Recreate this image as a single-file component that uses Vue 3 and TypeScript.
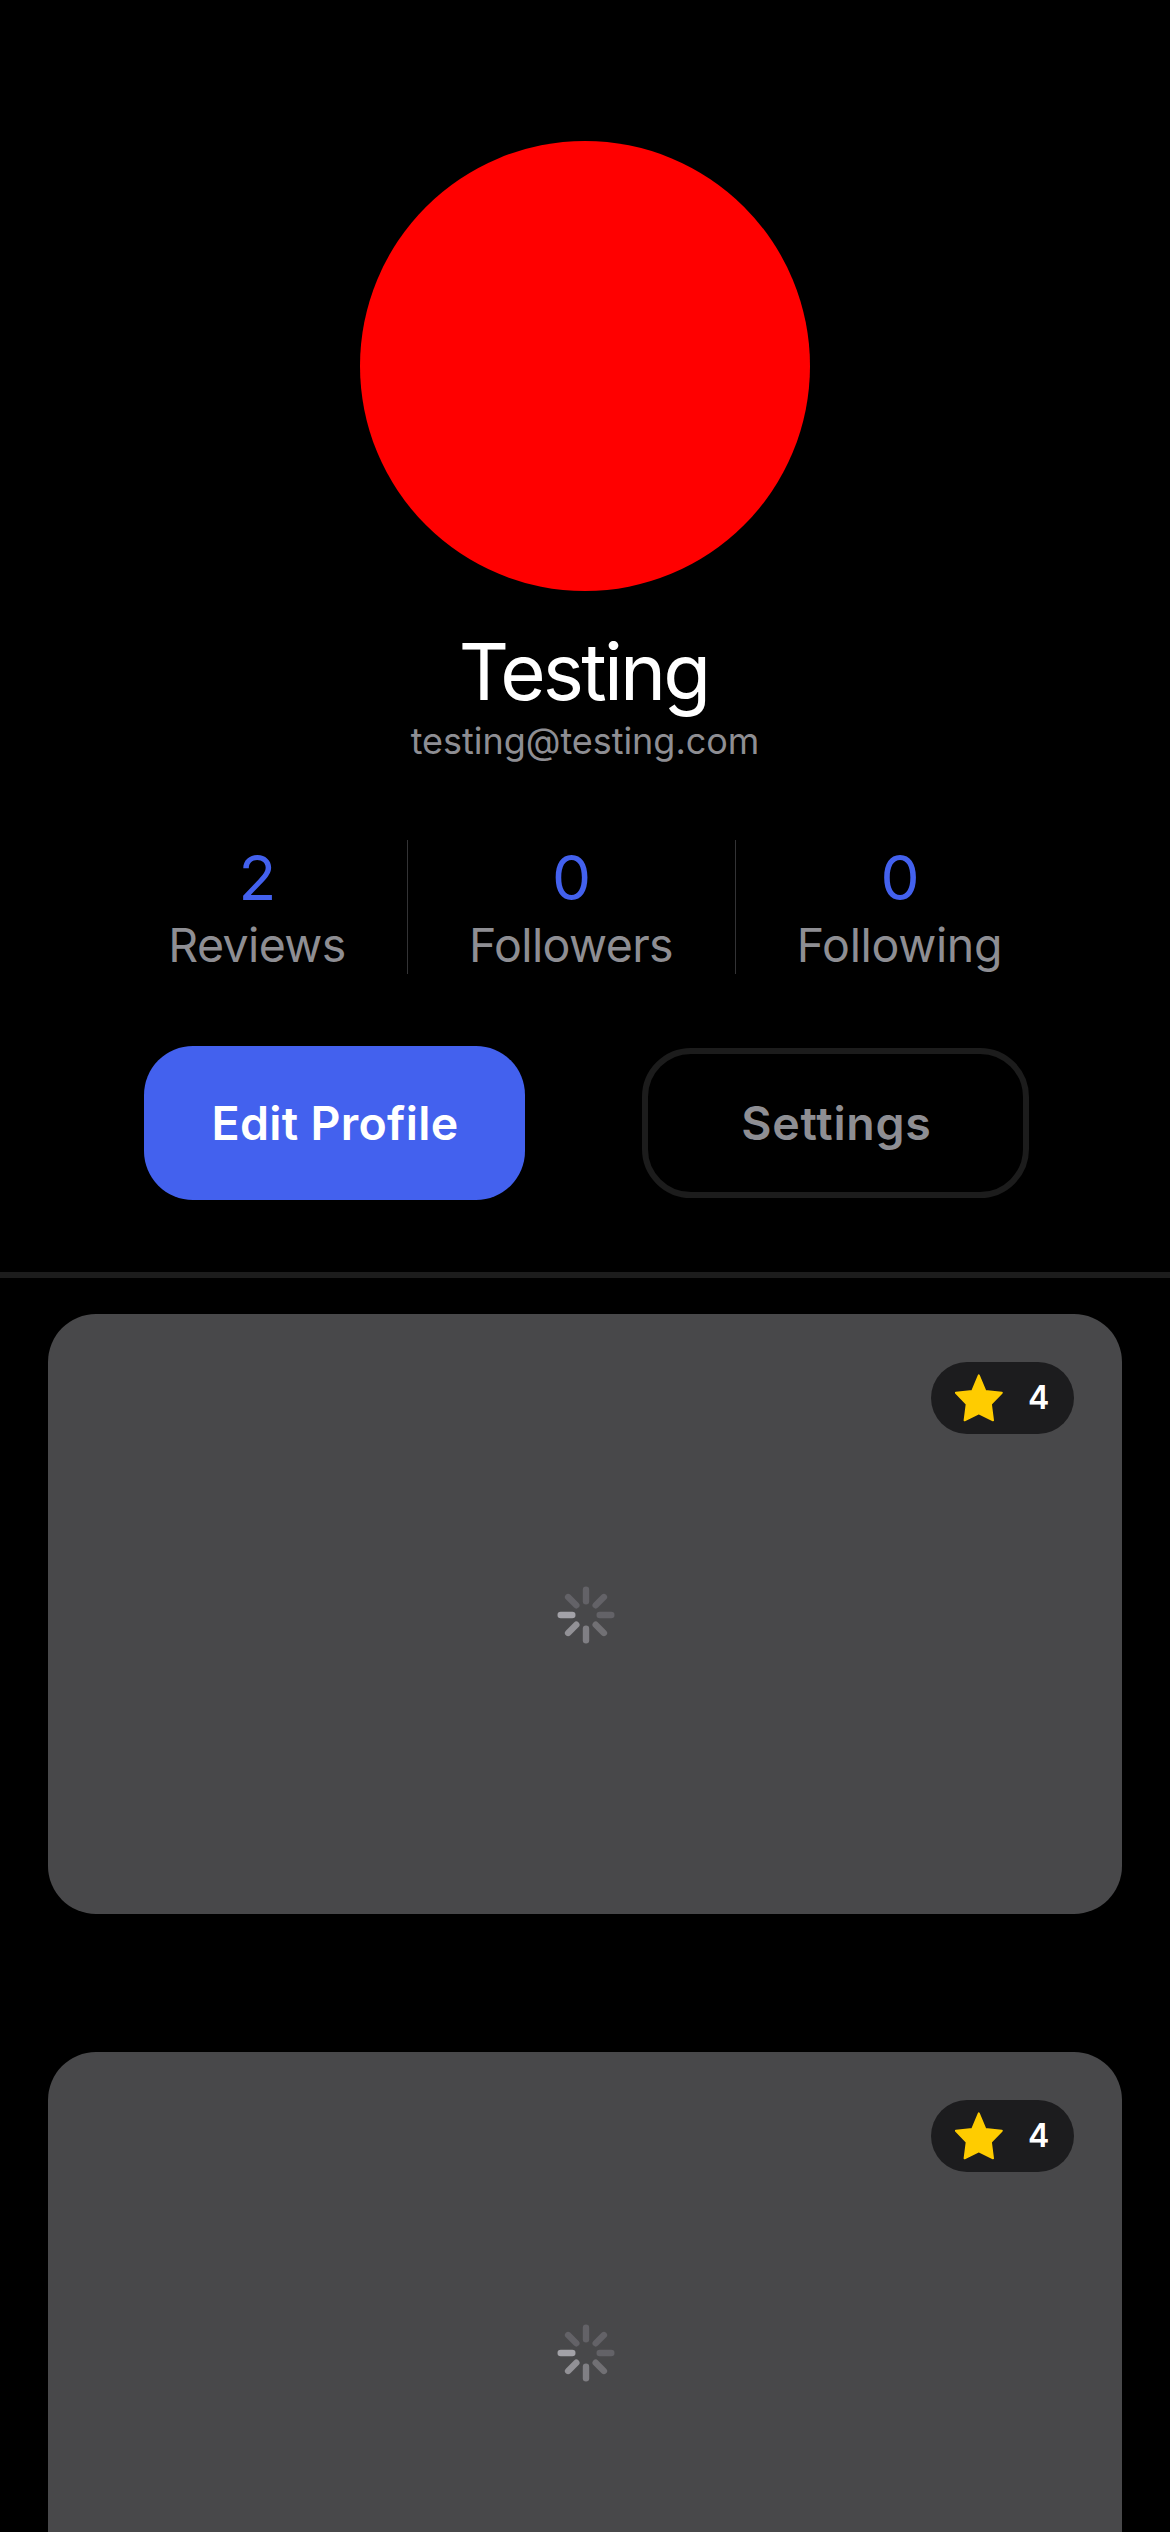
<script setup lang="ts">
interface Stat {
  value: number
  label: string
}

interface Review {
  id: number
  rating: number
}

const user = { name: 'Testing', email: 'testing@testing.com' }

const stats: Stat[] = [
  { value: 2, label: 'Reviews' },
  { value: 0, label: 'Followers' },
  { value: 0, label: 'Following' },
]

const reviews: Review[] = [
  { id: 1, rating: 4 },
  { id: 2, rating: 4 },
]

// Spinner spokes, clockwise from the top
const spokes: string[] = [
  '#636267', '#636267', '#636267', '#717074',
  '#807f84', '#929196', '#a3a2a8', '#636267',
]
</script>

<template>
  <main class="screen">
    <header class="profile">
      <div class="avatar"></div>
      <h1 class="name">{{ user.name }}</h1>
      <p class="email">{{ user.email }}</p>

      <div class="stats">
        <div v-for="stat in stats" :key="stat.label" class="stat">
          <span class="value">{{ stat.value }}</span>
          <span class="label">{{ stat.label }}</span>
        </div>
      </div>

      <div class="actions">
        <button class="btn primary" type="button">Edit Profile</button>
        <button class="btn outline" type="button">Settings</button>
      </div>
    </header>

    <section class="reviews">
      <article v-for="review in reviews" :key="review.id" class="card">
        <div class="badge">
          <svg class="star" viewBox="0 0 48 48">
            <path
              d="M23.8 1.3 L30.3 17 L46.8 18.7 L35.9 30.1 L38 46.3 L23.8 39.3 L9.6 46.3 L11.7 30.1 L0.9 18.7 L17.3 17 Z"
            />
          </svg>
          <span class="rating">{{ review.rating }}</span>
        </div>
        <svg class="spinner" viewBox="-30 -30 60 60">
          <line
            v-for="(color, i) in spokes"
            :key="i"
            x1="0"
            y1="-25.3"
            x2="0"
            y2="-13.7"
            :stroke="color"
            :transform="`rotate(${i * 45})`"
          />
        </svg>
      </article>
    </section>
  </main>
</template>

<style>
body {
  margin: 0;
  background: #000;
}
</style>

<style scoped>
.screen {
  box-sizing: border-box;
  width: 1170px;
  height: 2532px;
  overflow: hidden;
  background: #000;
  color: #fff;
  font-family: Inter, 'Liberation Sans', sans-serif;
}

.profile {
  box-sizing: border-box;
  height: 1278px;
  padding-top: 141px;
  border-bottom: 6px solid #1c1c1c;
  display: flex;
  flex-direction: column;
  align-items: center;
}

.avatar {
  flex: none;
  width: 450px;
  height: 450px;
  border-radius: 50%;
  background: #f00;
}

.name {
  margin: 34px 0 0;
  padding-right: 3px;
  font-size: 78px;
  font-weight: 400;
  line-height: 94px;
  letter-spacing: -2.8px;
}

.email {
  margin: 0;
  font-size: 36px;
  line-height: 44px;
  letter-spacing: -0.04px;
  color: #8e8e93;
}

.stats {
  display: flex;
  margin-top: 77px;
  width: 958px;
  height: 134px;
}

.stat {
  box-sizing: border-box;
  width: 328px;
  display: flex;
  flex-direction: column;
  align-items: center;
  letter-spacing: -0.6px;
}

.stat:first-child {
  width: 302px;
  padding-left: 2px;
}

.stat:last-child {
  letter-spacing: -0.33px;
}

.stat:not(:last-child) {
  border-right: 1px solid #333335;
}

.value {
  font-size: 62px;
  line-height: 76px;
  letter-spacing: 0;
  color: #4361ee;
}

.label {
  margin-top: -1px;
  padding-right: 1px;
  font-size: 46.5px;
  line-height: 60px;
  color: #8e8e93;
}

.actions {
  display: flex;
  align-items: center;
  gap: 117px;
  margin: 72px 0 0 3px;
}

.btn {
  box-sizing: border-box;
  flex: none;
  border: 0;
  margin: 0;
  padding: 0;
  border-radius: 49px;
  font-family: inherit;
  font-size: 46.5px;
  font-weight: 600;
  text-align: center;
}

.primary {
  width: 381px;
  height: 154px;
  padding-left: 1px;
  background: #4361ee;
  color: #fff;
  letter-spacing: 0.3px;
}

.outline {
  width: 387px;
  height: 150px;
  padding-left: 2px;
  border: 6px solid #1c1c1c;
  background: transparent;
  color: #8e8e93;
  letter-spacing: 0.74px;
}

.reviews {
  display: flex;
  flex-direction: column;
  gap: 138px;
  padding: 36px 48px 0;
}

.card {
  position: relative;
  height: 600px;
  flex: none;
  border-radius: 48px;
  background: #48484a;
  display: flex;
  align-items: center;
  justify-content: center;
}

.badge {
  position: absolute;
  top: 48px;
  right: 48px;
  box-sizing: border-box;
  width: 143px;
  height: 72px;
  padding-left: 24px;
  border-radius: 36px;
  background: #1c1c1e;
  display: flex;
  align-items: center;
  gap: 25px;
}

.star {
  flex: none;
  width: 48px;
  height: 48px;
  fill: #fc0;
  stroke: #fc0;
  stroke-width: 2;
  stroke-linejoin: round;
}

.rating {
  font-size: 32px;
  font-weight: 600;
  line-height: 40px;
}

.spinner {
  width: 60px;
  height: 60px;
  margin: 1px 0 0 1px;
  stroke-width: 6.4;
  stroke-linecap: round;
}
</style>
